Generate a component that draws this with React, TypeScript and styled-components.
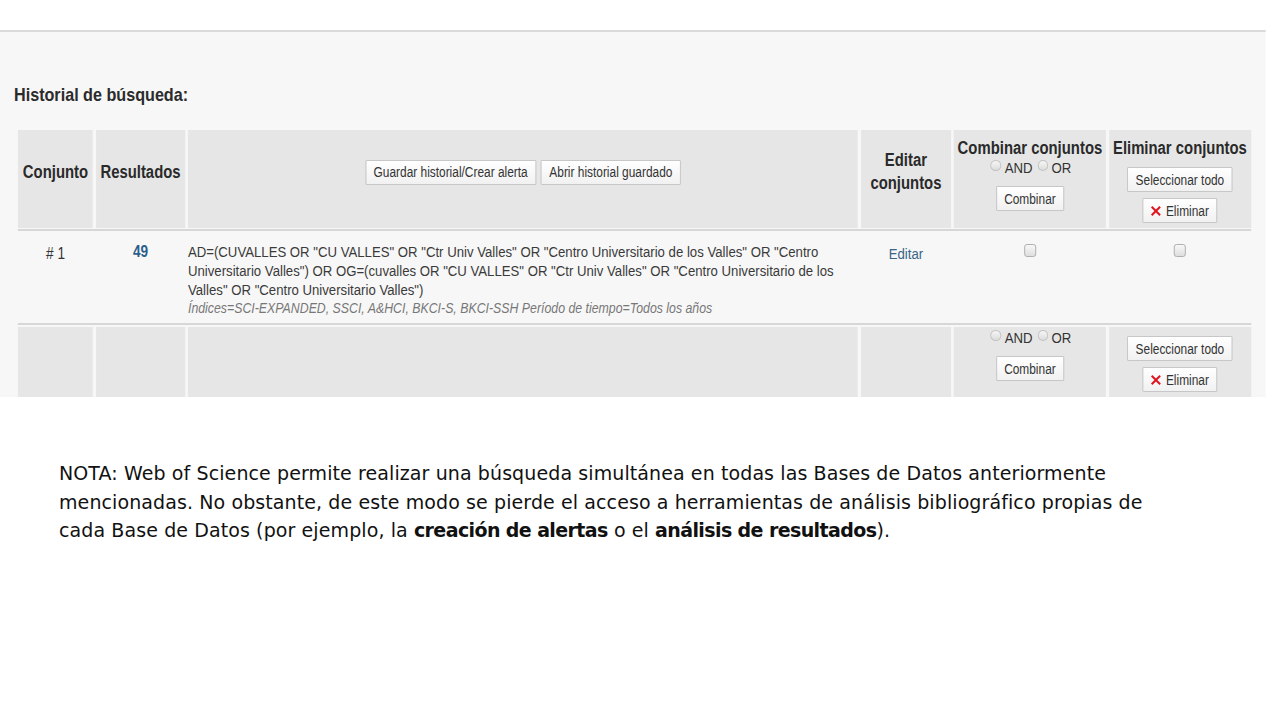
import React from "react";
import styled, { createGlobalStyle } from "styled-components";

/* The search-history panel is a horizontally squeezed screenshot of a web page:
   it is laid out at its natural width and then compressed by SQUEEZE. */
const SQUEEZE = 0.85;
const w = (px: number) => `${(px / SQUEEZE).toFixed(2)}px`;

const GlobalStyle = createGlobalStyle`
  html, body { margin: 0; padding: 0; background: #ffffff; }
  body { width: 1280px; height: 720px; overflow: hidden; }
`;

const Page = styled.div`
  width: 1280px;
  height: 720px;
  padding-top: 30px;
  box-sizing: border-box;
  overflow: hidden;
`;

const Shot = styled.section`
  width: ${w(1266)};
  height: 367px;
  box-sizing: border-box;
  border-top: 2px solid #dadada;
  background: #f7f7f7;
  overflow: hidden;
  padding-left: ${w(14)};
  transform: scaleX(${SQUEEZE});
  transform-origin: 0 0;
  font-family: "Liberation Sans", Arial, sans-serif;
  color: #222;
`;

const Title = styled.h2`
  margin: 51px 0 23px 0;
  font-size: 19px;
  line-height: 24px;
  font-weight: bold;
  color: #2b2b2b;
`;

const Grid = styled.div`
  margin-left: ${w(4)};
  display: grid;
  grid-template-columns: ${w(75)} ${w(89)} ${w(670)} ${w(90)} ${w(152)} ${w(142)};
  column-gap: ${w(3)};
`;

const HeadCell = styled.div<{ $top?: boolean; $pt?: number }>`
  height: 98px;
  box-sizing: border-box;
  background: #e6e6e6;
  display: flex;
  flex-direction: column;
  align-items: center;
  justify-content: ${(p) => (p.$top ? "flex-start" : "center")};
  padding-top: ${(p) => (p.$top ? `${p.$pt ?? 8}px` : "0")};
  padding-bottom: ${(p) => (p.$top ? "0" : "14px")};
  text-align: center;
  font-size: 17.5px;
  line-height: 23px;
  font-weight: bold;
  color: #2a2a2a;
`;

const HeadLabel = styled.div`
  font-size: 17.5px;
  line-height: 20px;
  font-weight: bold;
  white-space: nowrap;
`;

const ButtonRow = styled.div`
  display: flex;
  gap: ${w(5)};
`;

const Btn = styled.button<{ $mt?: number }>`
  margin-top: ${(p) => p.$mt ?? 0}px;
  height: 25px;
  padding: 0 ${w(7.5)};
  box-sizing: border-box;
  border: 1px solid #c4c4c4;
  border-radius: 1px;
  background: linear-gradient(#ffffff, #f1f1f1);
  font-family: inherit;
  font-size: 14px;
  color: #333;
  display: inline-flex;
  align-items: center;
  gap: ${w(5)};
  white-space: nowrap;
  cursor: pointer;
`;

const OptionLine = styled.div`
  display: flex;
  align-items: center;
  justify-content: center;
  gap: ${w(3)};
  font-size: 15.5px;
  line-height: 20px;
  font-weight: normal;
  color: #333;
  height: 20px;
`;

const Radio = styled.span`
  display: inline-block;
  width: ${w(11)};
  height: 11px;
  box-sizing: border-box;
  border-radius: 50%;
  border: 1px solid #c2c2c2;
  background: linear-gradient(#f6f6f6, #dcdcdc);
  margin-left: ${w(2)};
  margin-top: -5px;
`;

const Divider = styled.div<{ $mb?: number }>`
  grid-column: 1 / -1;
  height: 2px;
  background: #d7d7d7;
  margin: 1px 0 ${(p) => p.$mb ?? 1}px 0;
`;

const BodyCell = styled.div<{ $align?: string }>`
  height: 90px;
  box-sizing: border-box;
  padding-top: 10px;
  text-align: ${(p) => p.$align ?? "center"};
  font-size: 15.5px;
  line-height: 19px;
  color: #333;
`;

const SetNo = styled.span`
  display: inline-block;
  margin-top: 2px;
  font-size: 16px;
  color: #333;
`;

const Count = styled.span`
  font-size: 16px;
  color: #2a5f8c;
  font-weight: bold;
`;

const Query = styled.div`
  color: #3a3a3a;
  font-size: 15.5px;
  line-height: 19px;
  white-space: nowrap;
`;

const Meta = styled.div`
  color: #777;
  font-style: italic;
  font-size: 14.5px;
  line-height: 19px;
  white-space: nowrap;
`;

const EditLink = styled.a`
  display: inline-block;
  margin-top: 2px;
  font-size: 15.5px;
  color: #3a6487;
  text-decoration: none;
`;

const Check = styled.span`
  display: inline-block;
  width: ${w(12)};
  height: 13px;
  box-sizing: border-box;
  border: 1px solid #a9a9a9;
  border-radius: 3px;
  background: linear-gradient(#f8f8f8, #dedede);
  margin-top: 1px;
`;

const FootCell = styled.div<{ $pt?: number }>`
  height: 80px;
  box-sizing: border-box;
  background: #e6e6e6;
  display: flex;
  flex-direction: column;
  align-items: center;
  padding-top: ${(p) => p.$pt ?? 0}px;
`;

const Note = styled.p`
  margin: 62px 0 0 59px;
  font-family: "DejaVu Sans", "Liberation Sans", sans-serif;
  font-size: 19px;
  letter-spacing: 0.1px;
  line-height: 28.5px;
  color: #111;
  white-space: nowrap;
`;

const Strong = styled.b`
  font-weight: bold;
  letter-spacing: -0.6px;
`;

const RedX = () => (
  <svg width={w(10)} height="10" viewBox="0 0 10 10" preserveAspectRatio="none" aria-hidden="true">
    <path d="M1.5 1.5 L8.5 8.5 M8.5 1.5 L1.5 8.5" stroke="#e0141e" strokeWidth="2" strokeLinecap="square" />
  </svg>
);

const AndOr = () => (
  <OptionLine>
    <Radio />
    <span>AND</span>
    <Radio />
    <span>OR</span>
  </OptionLine>
);

export default function App() {
  return (
    <>
      <GlobalStyle />
      <Page>
        <Shot>
          <Title>Historial de búsqueda:</Title>
          <Grid>
            <HeadCell>Conjunto</HeadCell>
            <HeadCell>Resultados</HeadCell>
            <HeadCell>
              <ButtonRow>
                <Btn>Guardar historial/Crear alerta</Btn>
                <Btn>Abrir historial guardado</Btn>
              </ButtonRow>
            </HeadCell>
            <HeadCell>
              Editar
              <br />
              conjuntos
            </HeadCell>
            <HeadCell $top $pt={8}>
              <HeadLabel>Combinar conjuntos</HeadLabel>
              <AndOr />
              <Btn $mt={8}>Combinar</Btn>
            </HeadCell>
            <HeadCell $top $pt={8}>
              <HeadLabel>Eliminar conjuntos</HeadLabel>
              <Btn $mt={9}>Seleccionar todo</Btn>
              <Btn $mt={6}>
                <RedX />
                Eliminar
              </Btn>
            </HeadCell>

            <Divider $mb={1} />

            <BodyCell>
              <SetNo># 1</SetNo>
            </BodyCell>
            <BodyCell>
              <Count>49</Count>
            </BodyCell>
            <BodyCell $align="left">
              <Query>
                AD=(CUVALLES OR "CU VALLES" OR "Ctr Univ Valles" OR "Centro Universitario de los Valles" OR "Centro
                <br />
                Universitario Valles") OR OG=(cuvalles OR "CU VALLES" OR "Ctr Univ Valles" OR "Centro Universitario de los
                <br />
                Valles" OR "Centro Universitario Valles")
              </Query>
              <Meta>Índices=SCI-EXPANDED, SSCI, A&amp;HCI, BKCI-S, BKCI-SSH Período de tiempo=Todos los años</Meta>
            </BodyCell>
            <BodyCell>
              <EditLink href="#">Editar</EditLink>
            </BodyCell>
            <BodyCell>
              <Check />
            </BodyCell>
            <BodyCell>
              <Check />
            </BodyCell>

            <Divider $mb={2} />

            <FootCell />
            <FootCell />
            <FootCell />
            <FootCell />
            <FootCell $pt={1}>
              <AndOr />
              <Btn $mt={8}>Combinar</Btn>
            </FootCell>
            <FootCell $pt={9}>
              <Btn>Seleccionar todo</Btn>
              <Btn $mt={6}>
                <RedX />
                Eliminar
              </Btn>
            </FootCell>
          </Grid>
        </Shot>
        <Note>
          NOTA: Web of Science permite realizar una búsqueda simultánea en todas las Bases de Datos anteriormente
          <br />
          mencionadas. No obstante, de este modo se pierde el acceso a herramientas de análisis bibliográfico propias de
          <br />
          cada Base de Datos (por ejemplo, la <Strong>creación de alertas</Strong> o el <Strong>análisis de resultados</Strong>).
        </Note>
      </Page>
    </>
  );
}
